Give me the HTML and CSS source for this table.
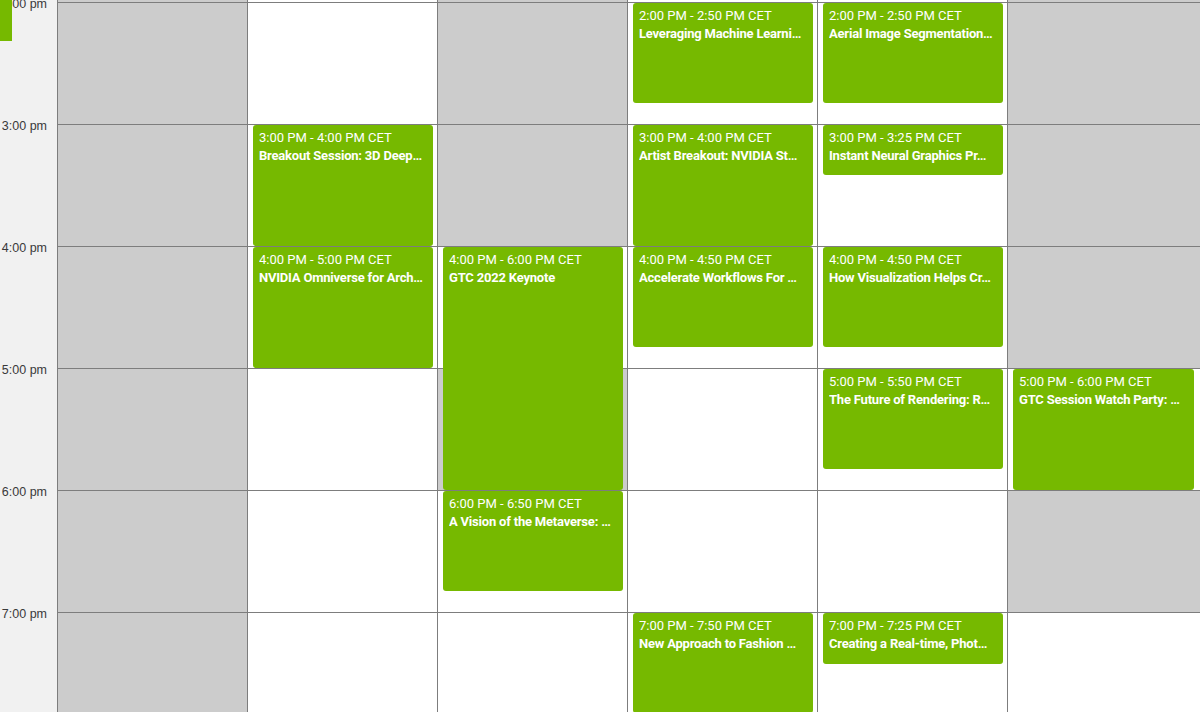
FILE: index.html
```html
<!DOCTYPE html>
<html>
<head>
<meta charset="utf-8">
<link rel="stylesheet" href="styles.css">
</head>
<body>
<div class="calendar">
  <div class="gutter">
    <div class="now-marker"></div>
    <div class="hour"><span class="hour-label">1:00 pm</span></div>
    <div class="hour"><span class="hour-label">2:00 pm</span></div>
    <div class="hour"><span class="hour-label">3:00 pm</span></div>
    <div class="hour"><span class="hour-label">4:00 pm</span></div>
    <div class="hour"><span class="hour-label">5:00 pm</span></div>
    <div class="hour"><span class="hour-label">6:00 pm</span></div>
    <div class="hour"><span class="hour-label">7:00 pm</span></div>
  </div>
  <div class="grid">
    <!-- 1 pm -->
    <div class="cell off"></div>
    <div class="cell"></div>
    <div class="cell off"></div>
    <div class="cell"></div>
    <div class="cell"></div>
    <div class="cell off"></div>

    <!-- 2 pm -->
    <div class="cell off"></div>
    <div class="cell"></div>
    <div class="cell off"></div>
    <div class="cell">
      <div class="event" style="height:100px"><div class="ev-time">2:00 PM - 2:50 PM CET</div><div class="ev-title">Leveraging Machine Learni…</div></div>
    </div>
    <div class="cell">
      <div class="event" style="height:100px"><div class="ev-time">2:00 PM - 2:50 PM CET</div><div class="ev-title">Aerial Image Segmentation…</div></div>
    </div>
    <div class="cell off"></div>

    <!-- 3 pm -->
    <div class="cell off"></div>
    <div class="cell">
      <div class="event" style="height:121px"><div class="ev-time">3:00 PM - 4:00 PM CET</div><div class="ev-title">Breakout Session: 3D Deep…</div></div>
    </div>
    <div class="cell off"></div>
    <div class="cell">
      <div class="event" style="height:121px"><div class="ev-time">3:00 PM - 4:00 PM CET</div><div class="ev-title">Artist Breakout: NVIDIA St…</div></div>
    </div>
    <div class="cell">
      <div class="event" style="height:50px"><div class="ev-time">3:00 PM - 3:25 PM CET</div><div class="ev-title">Instant Neural Graphics Pr…</div></div>
    </div>
    <div class="cell off"></div>

    <!-- 4 pm -->
    <div class="cell off"></div>
    <div class="cell">
      <div class="event" style="height:121px"><div class="ev-time">4:00 PM - 5:00 PM CET</div><div class="ev-title">NVIDIA Omniverse for Arch…</div></div>
    </div>
    <div class="cell">
      <div class="event" style="height:243px"><div class="ev-time">4:00 PM - 6:00 PM CET</div><div class="ev-title">GTC 2022 Keynote</div></div>
    </div>
    <div class="cell">
      <div class="event" style="height:100px"><div class="ev-time">4:00 PM - 4:50 PM CET</div><div class="ev-title">Accelerate Workflows For …</div></div>
    </div>
    <div class="cell">
      <div class="event" style="height:100px"><div class="ev-time">4:00 PM - 4:50 PM CET</div><div class="ev-title">How Visualization Helps Cr…</div></div>
    </div>
    <div class="cell off"></div>

    <!-- 5 pm -->
    <div class="cell off"></div>
    <div class="cell"></div>
    <div class="cell off"></div>
    <div class="cell"></div>
    <div class="cell">
      <div class="event" style="height:100px"><div class="ev-time">5:00 PM - 5:50 PM CET</div><div class="ev-title">The Future of Rendering: R…</div></div>
    </div>
    <div class="cell">
      <div class="event wide" style="height:121px"><div class="ev-time">5:00 PM - 6:00 PM CET</div><div class="ev-title">GTC Session Watch Party: …</div></div>
    </div>

    <!-- 6 pm -->
    <div class="cell off"></div>
    <div class="cell"></div>
    <div class="cell">
      <div class="event" style="height:100px"><div class="ev-time">6:00 PM - 6:50 PM CET</div><div class="ev-title">A Vision of the Metaverse: …</div></div>
    </div>
    <div class="cell"></div>
    <div class="cell"></div>
    <div class="cell off"></div>

    <!-- 7 pm -->
    <div class="cell off"></div>
    <div class="cell"></div>
    <div class="cell"></div>
    <div class="cell">
      <div class="event" style="height:100px"><div class="ev-time">7:00 PM - 7:50 PM CET</div><div class="ev-title">New Approach to Fashion …</div></div>
    </div>
    <div class="cell">
      <div class="event" style="height:51px"><div class="ev-time">7:00 PM - 7:25 PM CET</div><div class="ev-title">Creating a Real-time, Phot…</div></div>
    </div>
    <div class="cell"></div>
  </div>
</div>
</body>
</html>
```

FILE: styles.css
```css
html, body {
  margin: 0;
  padding: 0;
  background: #ffffff;
  overflow: hidden;
}

.calendar {
  display: flex;
  margin-top: -120px;
  width: 1260px;
}

.gutter {
  position: relative;
  width: 57px;
  flex: 0 0 57px;
  background: #f1f1f1;
  display: flex;
  flex-direction: column;
}

.hour {
  height: 122px;
  flex: 0 0 122px;
}

.hour-label {
  display: block;
  padding-right: 10px;
  text-align: right;
  font-family: "Liberation Sans", Arial, sans-serif;
  font-size: 12.5px;
  line-height: 14px;
  color: #3a3a3a;
  transform: translateY(-5px);
}

.now-marker {
  position: absolute;
  left: 0;
  top: 120px;
  width: 12px;
  height: 41px;
  background: #76b900;
  z-index: 2;
}

.grid {
  display: grid;
  grid-template-columns: repeat(5, 190px) 220px;
  grid-auto-rows: 122px;
}

.cell {
  box-sizing: border-box;
  border-left: 1px solid #7d7d7d;
  border-top: 1px solid #7d7d7d;
  background: #ffffff;
  padding: 0 0 0 5px;
}

.cell.off {
  background: #cccccc;
}

.event {
  position: relative;
  z-index: 1;
  box-sizing: border-box;
  width: 180px;
  padding: 4px 6px 0 6px;
  background: #76b900;
  border-radius: 3px;
  color: #ffffff;
  font-family: Roboto, "Liberation Sans", sans-serif;
  font-size: 13px;
  line-height: 18px;
  overflow: hidden;
}

.event.wide {
  width: 181px;
}

.ev-time,
.ev-title {
  white-space: nowrap;
  overflow: hidden;
  text-overflow: ellipsis;
}

.ev-time {
  font-weight: 400;
}

.ev-title {
  font-weight: 700;
  letter-spacing: -0.2px;
}
```
